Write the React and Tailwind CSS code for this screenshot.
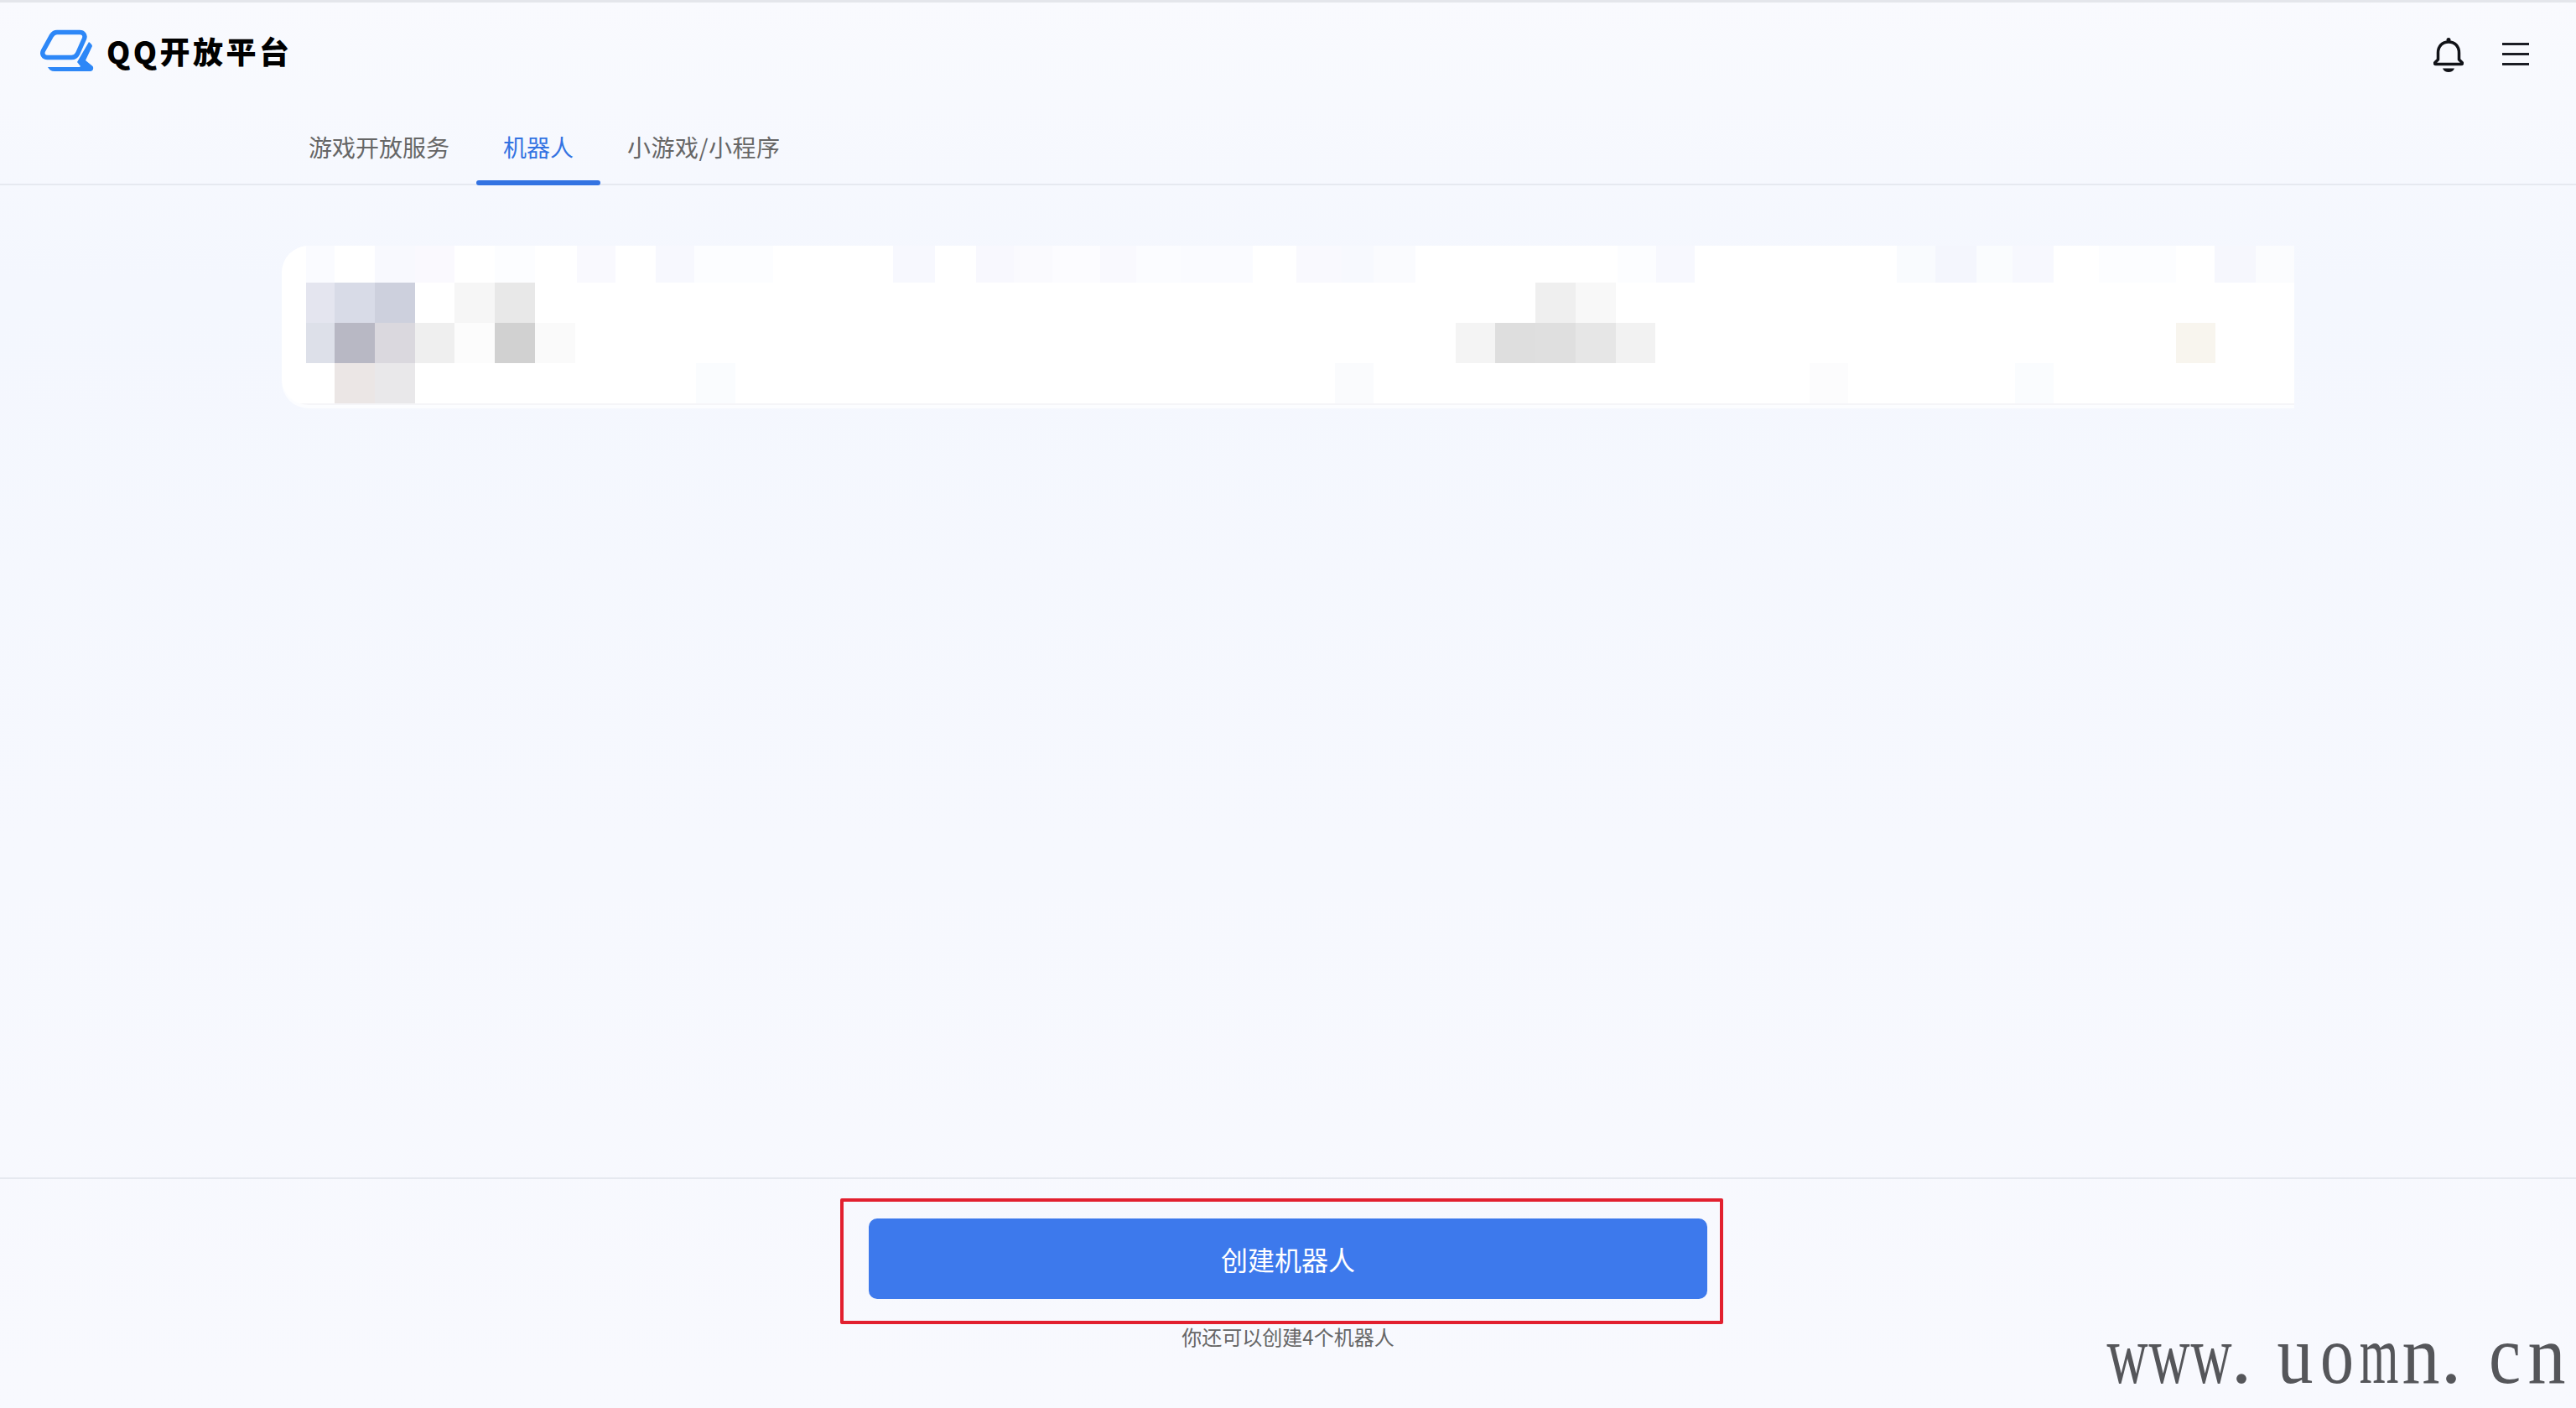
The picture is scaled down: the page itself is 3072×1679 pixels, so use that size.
// blurred-out bot row: [x, width, colour] for the faint top strip
const topRow = [
  [365, 34, "#fafbff"], [447, 48, "#f8f9fe"], [495, 47, "#faf9fe"], [590, 48, "#fcfdff"], [688, 46, "#f9f9fe"],
  [782, 46, "#f7f8fe"], [828, 94, "#fcfdff"], [1065, 50, "#f7f8fe"], [1164, 45, "#f8f8fe"], [1209, 46, "#fafafe"],
  [1255, 57, "#fcfcff"], [1312, 43, "#f9f9fe"], [1355, 53, "#fbfcff"], [1408, 86, "#fafbff"], [1546, 54, "#f9f9fe"],
  [1600, 38, "#f7f9fe"], [1638, 50, "#fafbfe"], [1929, 46, "#fcfdff"], [1975, 46, "#f7f8fe"], [2262, 46, "#f9fbfe"],
  [2308, 49, "#f4f6fd"], [2357, 43, "#fafcfe"], [2400, 49, "#f7f8fe"], [2503, 92, "#fcfdff"], [2641, 49, "#f6f7fd"],
  [2690, 46, "#fbfcfe"],
];

const mosaic = [
  [365, 337, 34, 48, "#e4e5ef"], [399, 337, 48, 48, "#d8dbe7"], [447, 337, 48, 48, "#cdd0dd"], [542, 337, 48, 48, "#f6f6f6"], [590, 337, 48, 48, "#e8e8e8"],
  [365, 385, 34, 48, "#dde0e9"], [399, 385, 48, 48, "#b8b8c4"], [447, 385, 48, 48, "#dad8de"], [495, 385, 47, 48, "#efefef"], [542, 385, 48, 48, "#fcfcfc"], [590, 385, 48, 48, "#d1d1d1"], [638, 385, 48, 48, "#fafafa"],
  [399, 433, 48, 48, "#ebe6e5"], [447, 433, 48, 48, "#e9e8ea"], [830, 433, 47, 48, "#fafcfe"], [1592, 433, 46, 48, "#fafbfd"], [2158, 433, 46, 48, "#fcfcfd"], [2403, 433, 46, 48, "#fafcfe"],
  [1831, 337, 48, 48, "#efefef"], [1879, 337, 48, 48, "#f8f8f8"],
  [1736, 385, 47, 48, "#f4f4f4"], [1783, 385, 48, 48, "#dedede"], [1831, 385, 48, 48, "#dfdfdf"], [1879, 385, 48, 48, "#e6e6e6"], [1927, 385, 47, 48, "#f2f2f2"],
  [2595, 385, 47, 48, "#f8f5ee"],
  [336, 481, 2400, 2, "#f5f5f8"],
];

const watermark = [
  ["w", "scale-x-[0.68]"], ["w", "scale-x-[0.68]"], ["w", "scale-x-[0.68]"], [".", "-translate-x-[14px]"],
  ["u", "scale-x-[0.86]"], ["o", "scale-x-[0.8]"], ["m", "scale-x-[0.6]"], ["n", "scale-x-[0.9]"], [".", "-translate-x-[14px]"],
  ["c", "scale-x-[0.86]"], ["n", "scale-x-[0.9]"],
];

function Logo() {
  return (
    <svg width="64" height="52" viewBox="0 0 64 52" fill="none">
      <path d="M20 3.5H47C51.5 3.5 54 7 52.5 11L44.5 29C43 32 40.5 33.5 37.5 33.5H8.5C4 33.5 1.500 29.500 3.500 25.500L13.500 7.500C15 5 17 3.500 20 3.500Z" stroke="#2d87f7" strokeWidth="5.500" />
      <path d="M58 15C60 17 62 18 62 20L54 37L62.500 44C64 46 63 50 60 50H17C13 50 10.500 48 9 45H47L48 44L44 39Z" fill="#2d87f7" />
    </svg>
  );
}

function Bell() {
  return (
    <svg width="36" height="41" viewBox="0 0 36 41" fill="none" stroke="#111318" strokeWidth="3.500" strokeLinejoin="round">
      <path d="M5.500 26V18C5.500 10 10.500 5 18 5C25.500 5 30.500 10 30.500 18V26L34 29.500C35 30.500 34.500 31.500 33 31.500H3C1.500 31.500 1 30.500 2 29.500Z" />
      <circle cx="18" cy="2.500" r="2.500" fill="#111318" stroke="none" />
      <path d="M11 36.500H25C24 39.500 21 41 18 41C15 41 12 39.500 11 36.500Z" fill="#111318" stroke="none" />
    </svg>
  );
}

function Menu() {
  return (
    <div className="-mt-[3px] flex w-8 flex-col gap-[9px]">
      <div className="h-[3px] bg-[#1b1d24]"></div>
      <div className="h-[3px] bg-[#1b1d24]"></div>
      <div className="h-[3px] bg-[#1b1d24]"></div>
    </div>
  );
}

export default function App() {
  return (
    <div
      className="relative flex h-[1679px] w-[3072px] flex-col overflow-hidden bg-gradient-to-b from-[#f9fafe] via-[#f4f7fe] via-20% to-[#f8f9fe] text-[#666]"
      style={{ fontFamily: '"Noto Sans CJK SC", "Noto Sans", sans-serif' }}
    >
      {/* Header */}
      <div className="h-[3px] bg-[#e4e6eb]"></div>
      <div className="flex h-[218px] flex-col border-b-2 border-[#e6e9f0]">
        <div className="flex h-[104px] items-start justify-between pl-12 pr-14">
          <div className="flex items-center gap-[15px] pt-8">
            <Logo />
            <span className="-mt-[3px] text-[36px] leading-[44px] font-black tracking-[3.500px] text-black">QQ开放平台</span>
          </div>
          <div className="flex items-center gap-[46px] pt-[42px]">
            <Bell />
            <Menu />
          </div>
        </div>

        {/* Tabs */}
        <div className="flex h-[112px] pl-[336px] text-[28px] leading-[40px]">
          <div className="px-8 pt-[48px]">游戏开放服务</div>
          <div className="relative px-8 pt-[48px] text-[#3373e2]">
            机器人
            <div className="absolute inset-x-0 bottom-[-2px] h-[6px] rounded-full bg-[#3373e2]"></div>
          </div>
          <div className="px-8 pt-[48px] tracking-[0.500px]">小游戏/小程序</div>
        </div>
      </div>

      {/* Bot card */}
      <div className="flex-1 px-[336px] pt-[72px]">
        <div className="h-[190px] w-[2400px] overflow-hidden rounded-l-[32px] bg-white shadow-[0_4px_0_#fcfdff]">
          <svg width="2400" height="190" viewBox="336 293 2400 190">
            {topRow.map(([x, w, fill]) => (
              <rect key={x} x={x} y="293" width={w} height="44" fill={fill} />
            ))}
            {mosaic.map(([x, y, w, h, fill]) => (
              <rect key={`${x}-${y}`} x={x} y={y} width={w} height={h} fill={fill} />
            ))}
          </svg>
        </div>
      </div>

      {/* Footer */}
      <div className="flex h-[275px] flex-col items-center border-t-2 border-[#e6e9f0] pt-[23px]">
        <div className="-ml-[15px] h-[150px] w-[1053px] rounded-[2px] border-4 border-[#e2202f] pl-[30px] pt-[20px]">
          <button className="h-24 w-[1000px] rounded-[10px] bg-[#3d79ec] text-[32px] text-white">创建机器人</button>
        </div>
        <p className="-mt-[1px] text-[24px] leading-[32px]">你还可以创建4个机器人</p>
      </div>

      {/* Watermark */}
      <div
        className="absolute bottom-[13px] right-[10px] flex text-[100px] leading-[100px] text-[#55565a]"
        style={{ fontFamily: '"Liberation Serif", serif' }}
      >
        {watermark.map(([ch, cls], i) => (
          <span key={i} className={`flex w-[50px] justify-center ${cls}`}>{ch}</span>
        ))}
      </div>
    </div>
  );
}
